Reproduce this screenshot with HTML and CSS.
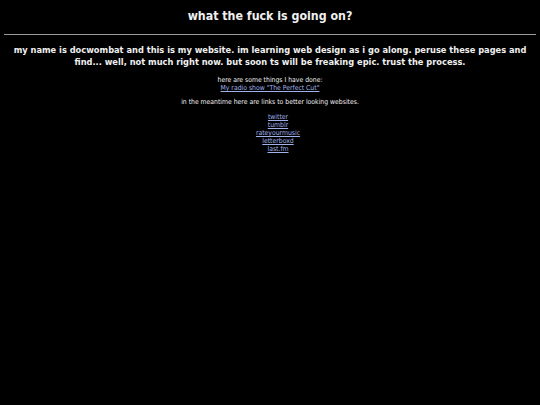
FILE: index.html
```html
<!DOCTYPE html>
<html>
<head>
<meta charset="utf-8">
<title>what the fuck is going on?</title>
<link rel="stylesheet" href="styles.css">
</head>
<body>
<h1 class="title">what the fuck is going on?</h1>
<hr class="rule">
<p class="intro">my name is docwombat and this is my website. im learning web design as i go along. peruse these pages and find... well, not much right now. but soon ts will be freaking epic. trust the process.</p>
<p class="small done">here are some things I have done:<br><a href="#">My radio show "The Perfect Cut"</a></p>
<p class="small meantime">in the meantime here are links to better looking websites.</p>
<ul class="small links">
  <li><a href="#">twitter</a></li>
  <li><a href="#">tumblr</a></li>
  <li><a href="#">rateyourmusic</a></li>
  <li><a href="#">letterboxd</a></li>
  <li><a href="#">last.fm</a></li>
</ul>
</body>
</html>
```
FILE: styles.css
```css
html, body {
  background: #000;
}
body {
  margin: 0 4px;
  color: #f0f0f0;
  font-family: "DejaVu Sans Condensed", "DejaVu Sans", sans-serif;
  text-align: center;
}
.title {
  font-size: 12.3px;
  font-weight: 700;
  margin: 0;
  padding-top: 8px;
  line-height: 16px;
}
.rule {
  border: 0;
  border-top: 1px solid #999;
  margin: 10px 0 9px;
}
.intro {
  font-size: 9.2px;
  font-weight: 700;
  line-height: 12px;
  margin: 0 0 8px;
}
.small {
  font-size: 6.8px;
  line-height: 8px;
  margin: 0;
}
.done {
  margin-bottom: 6px;
}
.meantime {
  margin-bottom: 7px;
}
.links {
  list-style: none;
  padding: 0 0 0 16px;
}
a {
  color: #a0b2ea;
}
```
